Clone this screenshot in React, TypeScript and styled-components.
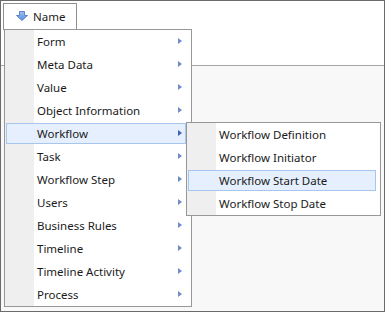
import styled, { createGlobalStyle } from 'styled-components';

const GlobalStyle = createGlobalStyle`
  html, body {
    margin: 0;
    padding: 0;
    background: #ffffff;
  }
  body {
    font-family: "Noto Sans", "Open Sans", sans-serif;
    font-size: 11.5px;
    color: #1a1a1a;
  }
`;

const Frame = styled.div`
  position: relative;
  width: 385px;
  height: 312px;
  box-sizing: border-box;
  border: 1px solid #6b6b6b;
  background: #f8f8f8;
  display: flex;
  flex-direction: column;
`;

const HeaderBand = styled.div`
  height: 62px;
  background: #ffffff;
  border-bottom: 1px solid #a5a5a5;
  padding: 2px 0 0 2px;
  box-sizing: content-box;
`;

const ColumnHeader = styled.div`
  width: 74px;
  height: 27px;
  box-sizing: border-box;
  border: 1px solid #8e8e8e;
  background: #ffffff;
  display: flex;
  align-items: center;
  gap: 5px;
  padding: 0 0 1px 12px;
`;

const Menu = styled.div<{ $left: number; $top: number; $width: number }>`
  position: absolute;
  left: ${(p) => p.$left}px;
  top: ${(p) => p.$top}px;
  width: ${(p) => p.$width}px;
  box-sizing: border-box;
  border: 1px solid #979797;
  background: linear-gradient(to right, #efefef 0 29px, #ffffff 29px);
  display: flex;
  flex-direction: column;
`;

const Item = styled.div<{ $right: number }>`
  height: 23px;
  box-sizing: border-box;
  padding: 1px ${(p) => p.$right}px 1px 1px;
  display: flex;
`;

const ItemBox = styled.div<{ $active?: boolean }>`
  flex: 1;
  display: flex;
  align-items: center;
  box-sizing: border-box;
  padding: 0 3px 1px 30px;
  border: 1px solid ${(p) => (p.$active ? '#a7c6ef' : 'transparent')};
  background: ${(p) => (p.$active ? '#e5effd' : 'transparent')};
  white-space: nowrap;
`;

const Arrow = styled.span<{ $active?: boolean }>`
  margin-left: auto;
  width: 0;
  height: 0;
  border-top: 3.5px solid transparent;
  border-bottom: 3.5px solid transparent;
  border-left: 4px solid ${(p) => (p.$active ? '#3f63b3' : '#6f8cc6')};
`;

const mainItems = [
  'Form',
  'Meta Data',
  'Value',
  'Object Information',
  'Workflow',
  'Task',
  'Workflow Step',
  'Users',
  'Business Rules',
  'Timeline',
  'Timeline Activity',
  'Process',
];

const subItems = [
  'Workflow Definition',
  'Workflow Initiator',
  'Workflow Start Date',
  'Workflow Stop Date',
];

const SortDown = () => (
  <svg width="12" height="10" viewBox="0 0 12 10">
    <defs>
      <linearGradient id="sortFill" x1="0" y1="0" x2="0" y2="1">
        <stop offset="0" stopColor="#9cc0f0" />
        <stop offset="1" stopColor="#5a8fda" />
      </linearGradient>
    </defs>
    <path
      d="M3.5 0.5h5v4h3l-5.5 5l-5.5-5h3z"
      fill="url(#sortFill)"
      stroke="#5b86c9"
      strokeWidth="1"
      strokeLinejoin="round"
    />
  </svg>
);

const App = () => {
  return (
    <>
      <GlobalStyle />
      <Frame>
        <HeaderBand>
          <ColumnHeader>
            <SortDown />
            <span>Name</span>
          </ColumnHeader>
        </HeaderBand>

        <Menu $left={3} $top={28} $width={188}>
          {mainItems.map((label) => (
            <Item key={label} $right={5}>
              <ItemBox $active={label === 'Workflow'}>
                {label}
                <Arrow $active={label === 'Workflow'} />
              </ItemBox>
            </Item>
          ))}
        </Menu>

        <Menu $left={185} $top={121} $width={195}>
          {subItems.map((label) => (
            <Item key={label} $right={4}>
              <ItemBox $active={label === 'Workflow Start Date'}>{label}</ItemBox>
            </Item>
          ))}
        </Menu>
      </Frame>
    </>
  );
};

export default App;
